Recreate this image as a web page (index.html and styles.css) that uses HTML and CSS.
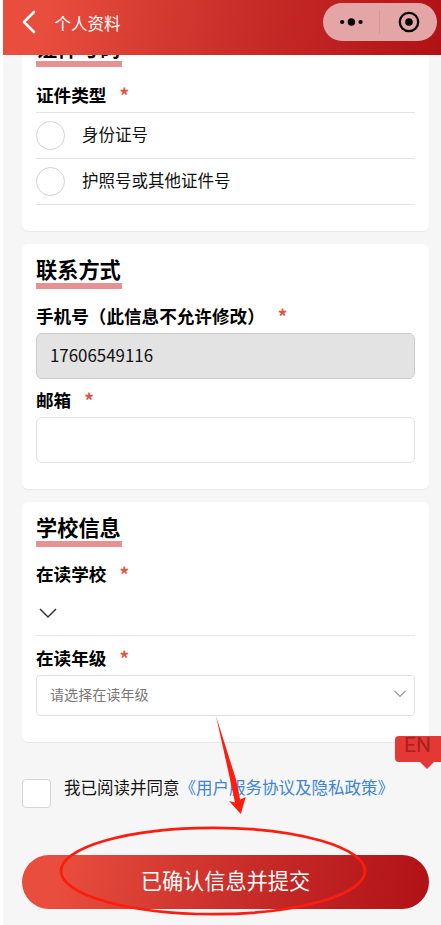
FILE: index.html
```html
<!DOCTYPE html>
<html lang="zh-CN">
<head>
  <meta charset="UTF-8">
  <meta name="viewport" content="width=device-width, initial-scale=1.0">
  <title>个人资料</title>
  <link rel="stylesheet" href="styles.css">
</head>
<body>
  <div class="page">
    <header class="navbar">
      <svg class="back" width="14" height="24" viewBox="0 0 14 24">
        <path d="M12 2 L2 12 L12 22" />
      </svg>
      <h1>个人资料</h1>
      <div class="capsule">
        <svg width="24" height="10" viewBox="0 0 24 10">
          <circle cx="2.2" cy="5" r="2.1" />
          <circle cx="11.4" cy="5" r="3.7" />
          <circle cx="20.6" cy="5" r="2.1" />
        </svg>
        <span class="divider"></span>
        <svg width="22" height="22" viewBox="0 0 22 22">
          <circle class="ring" cx="11" cy="11" r="9.2" />
          <circle cx="11" cy="11" r="3.8" />
        </svg>
      </div>
    </header>

    <main class="content">
      <!-- ID document -->
      <section class="card card-first">
        <h2>证件号码</h2>
        <div class="label">证件类型<span class="required">*</span></div>
        <ul class="radio-list">
          <li><span class="radio"></span><span class="radio-text">身份证号</span></li>
          <li><span class="radio"></span><span class="radio-text">护照号或其他证件号</span></li>
        </ul>
      </section>

      <!-- Contact -->
      <section class="card">
        <h2>联系方式</h2>
        <div class="label">手机号（此信息不允许修改）<span class="required">*</span></div>
        <div class="input disabled">17606549116</div>
        <div class="label label-next">邮箱<span class="required">*</span></div>
        <div class="input"></div>
      </section>

      <!-- School -->
      <section class="card">
        <h2>学校信息</h2>
        <div class="label">在读学校<span class="required">*</span></div>
        <div class="picker">
          <svg width="18" height="11" viewBox="0 0 18 11">
            <path d="M1 1 L9 9 L17 1" />
          </svg>
        </div>
        <div class="label label-next">在读年级<span class="required">*</span></div>
        <div class="input select">
          <span>请选择在读年级</span>
          <svg width="12" height="8" viewBox="0 0 12 8">
            <path d="M0.5 1 L6 6.5 L11.5 1" />
          </svg>
        </div>
      </section>

      <div class="agreement">
        <span class="checkbox"></span>
        <p>我已阅读并同意<a>《用户服务协议及隐私政策》</a></p>
      </div>

      <button class="submit">已确认信息并提交</button>
    </main>

    <div class="lang"><span>EN</span></div>

    <!-- Hint: arrow and circle round the submit button -->
    <svg class="hint" width="310" height="204" viewBox="58 714 310 204">
      <path d="M216 716 L235.9 779 L240.2 799.5 L245.8 797 L240.8 814 L229 801 L235 802.5 L230 779 Z" />
      <ellipse cx="213" cy="871" rx="152" ry="43.2" />
    </svg>
  </div>
</body>
</html>
```
FILE: styles.css
```css
* {
  box-sizing: border-box;
}

body {
  margin: 0;
  background: #fff;
  color: #111;
  font-family: "Noto Sans CJK SC", sans-serif;
}

h1, h2, p, ul {
  margin: 0;
  padding: 0;
}

.page {
  position: relative;
  display: flex;
  flex-direction: column;
  height: 925px;
  margin-left: 3px;
  background: #f6f6f6;
  overflow: hidden;
}

/* Navbar */
.navbar {
  display: flex;
  flex: none;
  align-items: center;
  height: 55px;
  padding: 0 4px 11px 19px;
  background: linear-gradient(100deg, #e84d3d 10%, #cb302b 50%, #b01116);
}

.back path {
  fill: none;
  stroke: #fff;
  stroke-width: 2.6;
  stroke-linecap: round;
  stroke-linejoin: round;
}

.navbar h1 {
  flex: 1;
  margin-left: 18.5px;
  padding-top: 1px;
  color: #fff;
  font-size: 16.5px;
  font-weight: 400;
}

.capsule {
  display: flex;
  align-items: center;
  width: 114px;
  height: 38px;
  padding: 0 17px;
  border-radius: 19px;
  background: #e4a5a6;
  justify-content: space-between;
}

.capsule .divider {
  width: 1px;
  height: 24px;
  margin-left: 2px;
  margin-right: 5px;
  background: #d89495;
}

.capsule .ring {
  fill: none;
  stroke: #000;
  stroke-width: 2.3;
}

/* Cards */
.content {
  flex: 1;
  padding: 0 12px 0 19px;
  overflow: hidden;
}

.card {
  margin-bottom: 13px;
  padding: 14px 14px 26px;
  border-radius: 6px;
  background: #fff;
  box-shadow: 0 1px 1px rgba(0, 0, 0, 0.06);
}

.card-first {
  margin-top: -33px;
}

.card h2 {
  width: 86px;
  padding-bottom: 4px;
  border-bottom: 6px solid #e89193;
  color: #000;
  font-size: 21.2px;
  font-weight: 700;
  line-height: 21px;
  white-space: nowrap;
}

.label {
  display: flex;
  margin: 14px 0 4px;
  color: #000;
  font-size: 17.6px;
  font-weight: 700;
  line-height: 26px;
}

.card-first .label {
  margin-top: 15px;
}

.label-next {
  margin-top: 8px;
}

.required {
  margin-left: 13px;
  color: #dd5545;
  font-size: 19px;
}

.radio-list {
  border-top: 1px solid #e3e3e3;
  list-style: none;
}

.radio-list li {
  display: flex;
  align-items: center;
  height: 46px;
  border-bottom: 1px solid #e3e3e3;
  font-size: 16.5px;
}

.radio {
  width: 29px;
  height: 29px;
  margin-right: 17px;
  border: 1px solid #d2d2d2;
  border-radius: 50%;
}

.radio-text {
  padding-bottom: 4px;
}

.input {
  display: flex;
  align-items: center;
  height: 46px;
  padding: 0 13px 3px;
  border: 1px solid #e2e2e2;
  border-radius: 6px;
  font-size: 16.9px;
}

.input.disabled {
  border-color: #cbcbcb;
  background: #e3e3e3;
}

.picker {
  display: flex;
  align-items: center;
  height: 45px;
  padding-left: 3px;
  border-bottom: 1px solid #e6e6e6;
}

.picker + .label-next {
  margin-top: 9px;
}

.picker path {
  fill: none;
  stroke: #333;
  stroke-width: 1.5;
}

.input.select {
  justify-content: space-between;
  height: 41px;
  padding-right: 8px;
  border-radius: 4px;
  color: #777;
  font-size: 14.1px;
}

.select path {
  fill: none;
  stroke: #999;
  stroke-width: 1.2;
}

/* Agreement */
.agreement {
  display: flex;
  margin-top: 37px;
}

.checkbox {
  width: 29px;
  height: 29px;
  border: 1px solid #d6d6d6;
  border-radius: 4px;
  background: #fff;
}

.agreement p {
  margin-left: 13px;
  font-size: 16.5px;
  line-height: 16px;
  white-space: nowrap;
}

.agreement a {
  color: #3d85d1;
}

.submit {
  display: block;
  width: 100%;
  height: 54px;
  margin-top: 47px;
  padding: 0 0 6px;
  border: none;
  border-radius: 27px;
  background: linear-gradient(100deg, #e84d3d 10%, #cb302b 50%, #b01116);
  color: #fff;
  font-family: inherit;
  font-size: 21.2px;
}

/* Language switch on the right edge */
.lang {
  position: absolute;
  right: 0;
  top: 736px;
  width: 46px;
  height: 26px;
  border-radius: 4px 0 0 4px;
  background: #e43835;
  color: #aa201d;
  font-family: Roboto, sans-serif;
  font-size: 21px;
}

.lang span {
  display: block;
  height: 26px;
  padding-left: 9px;
  line-height: 18px;
  overflow: hidden;
}

.lang::after {
  content: "";
  position: absolute;
  right: 7px;
  top: 26px;
  border: 7px solid transparent;
  border-top-color: #e43835;
  border-bottom: none;
}

.hint {
  position: absolute;
  left: 55px;
  top: 714px;
  pointer-events: none;
}

.hint path {
  fill: #fb1d10;
}

.hint ellipse {
  fill: none;
  stroke: #fb1d10;
  stroke-width: 2.7;
}
```
